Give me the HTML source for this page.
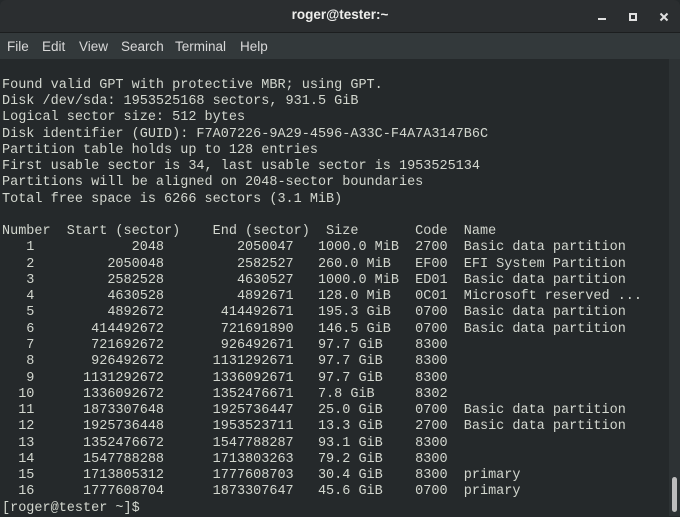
<!DOCTYPE html>
<html><head><meta charset="utf-8"><style>
html,body{margin:0;padding:0;width:680px;height:516px;overflow:hidden;background:#25292b;}
#title{position:absolute;left:0;top:0;width:680px;height:32px;background:#2b2e30;border-radius:6px 6px 0 0;}
#title .t{position:absolute;left:0;width:680px;top:7px;text-align:center;font:bold 13.5px "Liberation Sans",sans-serif;color:#eeeeec;}
#sep{position:absolute;left:0;top:32px;width:680px;height:1px;background:#1c1e1f;}
#menu{position:absolute;left:0;top:33px;width:680px;height:26px;background:#33393b;font:13.5px "Liberation Sans",sans-serif;color:#d8d8d8;}
#menu span{position:absolute;top:6px;}
#term{position:absolute;left:0;top:59px;width:669px;height:457px;background:#25292b;}
pre{position:absolute;left:2px;top:2.5px;margin:0;font:13.5px/16.27px "Liberation Mono",monospace;color:#d3d7cf;}
#sb{position:absolute;left:669px;top:59px;width:11px;height:457px;background:#2d3234;}
#thumb{position:absolute;left:672px;top:477px;width:5px;height:35px;background:#bdbdbd;border-radius:3px;}
</style></head><body>
<div id="title"><div class="t">roger@tester:~</div>
<div style="position:absolute;left:598px;top:18px;width:8px;height:2px;background:#e0e0e0"></div>
<div style="position:absolute;left:629px;top:13px;width:4px;height:4px;border:2px solid #e0e0e0"></div>
<svg style="position:absolute;left:659px;top:12px" width="10" height="10"><path d="M1.5 1.5L8.5 8.5M8.5 1.5L1.5 8.5" stroke="#e0e0e0" stroke-width="2"/></svg>
</div>
<div id="sep"></div>
<div id="menu"><span style="left:7px">File</span><span style="left:42px">Edit</span><span style="left:79px">View</span><span style="left:121px">Search</span><span style="left:175px">Terminal</span><span style="left:240px">Help</span></div>
<div id="term"><pre>

Found valid GPT with protective MBR; using GPT.
Disk /dev/sda: 1953525168 sectors, 931.5 GiB
Logical sector size: 512 bytes
Disk identifier (GUID): F7A07226-9A29-4596-A33C-F4A7A3147B6C
Partition table holds up to 128 entries
First usable sector is 34, last usable sector is 1953525134
Partitions will be aligned on 2048-sector boundaries
Total free space is 6266 sectors (3.1 MiB)

Number  Start (sector)    End (sector)  Size       Code  Name
   1            2048         2050047   1000.0 MiB  2700  Basic data partition
   2         2050048         2582527   260.0 MiB   EF00  EFI System Partition
   3         2582528         4630527   1000.0 MiB  ED01  Basic data partition
   4         4630528         4892671   128.0 MiB   0C01  Microsoft reserved ...
   5         4892672       414492671   195.3 GiB   0700  Basic data partition
   6       414492672       721691890   146.5 GiB   0700  Basic data partition
   7       721692672       926492671   97.7 GiB    8300
   8       926492672      1131292671   97.7 GiB    8300
   9      1131292672      1336092671   97.7 GiB    8300
  10      1336092672      1352476671   7.8 GiB     8302
  11      1873307648      1925736447   25.0 GiB    0700  Basic data partition
  12      1925736448      1953523711   13.3 GiB    2700  Basic data partition
  13      1352476672      1547788287   93.1 GiB    8300
  14      1547788288      1713803263   79.2 GiB    8300
  15      1713805312      1777608703   30.4 GiB    8300  primary
  16      1777608704      1873307647   45.6 GiB    0700  primary
[roger@tester ~]$ </pre></div>
<div id="sb"></div><div id="thumb"></div>
</body></html>
